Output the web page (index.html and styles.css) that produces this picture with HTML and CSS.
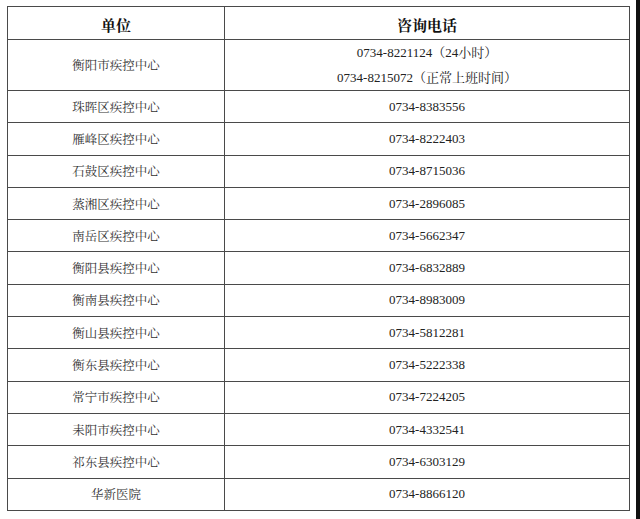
FILE: index.html
```html
<!DOCTYPE html>
<html lang="zh-CN">
<head>
<meta charset="utf-8">
<title>咨询电话</title>
<link rel="stylesheet" href="styles.css">
</head>
<body>
<div class="page">
  <div class="sheet">
    <table class="contacts">
      <thead>
        <tr class="head-row">
          <th class="col-unit">单位</th>
          <th class="col-phone">咨询电话</th>
        </tr>
      </thead>
      <tbody>
        <tr class="double-row">
          <td class="unit">衡阳市疾控中心</td>
          <td class="phone phone-multi">
            <div class="line">0734-8221124（24小时）</div>
            <div class="line">0734-8215072（正常上班时间）</div>
          </td>
        </tr>
        <tr><td class="unit">珠晖区疾控中心</td><td class="phone">0734-8383556</td></tr>
        <tr><td class="unit">雁峰区疾控中心</td><td class="phone">0734-8222403</td></tr>
        <tr><td class="unit">石鼓区疾控中心</td><td class="phone">0734-8715036</td></tr>
        <tr><td class="unit">蒸湘区疾控中心</td><td class="phone">0734-2896085</td></tr>
        <tr><td class="unit">南岳区疾控中心</td><td class="phone">0734-5662347</td></tr>
        <tr><td class="unit">衡阳县疾控中心</td><td class="phone">0734-6832889</td></tr>
        <tr><td class="unit">衡南县疾控中心</td><td class="phone">0734-8983009</td></tr>
        <tr><td class="unit">衡山县疾控中心</td><td class="phone">0734-5812281</td></tr>
        <tr><td class="unit">衡东县疾控中心</td><td class="phone">0734-5222338</td></tr>
        <tr><td class="unit">常宁市疾控中心</td><td class="phone">0734-7224205</td></tr>
        <tr><td class="unit">耒阳市疾控中心</td><td class="phone">0734-4332541</td></tr>
        <tr><td class="unit">祁东县疾控中心</td><td class="phone">0734-6303129</td></tr>
        <tr><td class="unit">华新医院</td><td class="phone">0734-8866120</td></tr>
      </tbody>
    </table>
  </div>
  <div class="edge"></div>
</div>
</body>
</html>
```

FILE: styles.css
```css
html, body {
  margin: 0;
  padding: 0;
  background: #ffffff;
}

.page {
  display: flex;
  width: 640px;
  height: 519px;
}

.sheet {
  flex: 1;
  padding: 6px 0 0 7px;
}

.edge {
  width: 4px;
  background: #111111;
}

.contacts {
  border-collapse: collapse;
  width: 623px;
  table-layout: fixed;
  font-family: "Liberation Serif", "Noto Serif CJK SC", "Noto Sans CJK SC", serif;
  color: #222222;
}

.contacts th,
.contacts td {
  border: 1px solid #4a4a4a;
  padding: 0;
  text-align: center;
  vertical-align: middle;
}

.col-unit {
  width: 216px;
}

.head-row {
  height: 33px;
}

.head-row th {
  font-size: 15px;
  font-weight: bold;
  color: #111111;
  padding-top: 2px;
}

.contacts tbody tr {
  height: 32.3px;
}

.contacts tbody tr.double-row {
  height: 51px;
}

.unit {
  font-size: 12.5px;
  color: #333333;
  padding-top: 3px;
}

.phone {
  font-size: 13px;
  padding-top: 3px;
}

.phone-multi {
  padding-top: 0;
}

.line {
  line-height: 25px;
}
```
